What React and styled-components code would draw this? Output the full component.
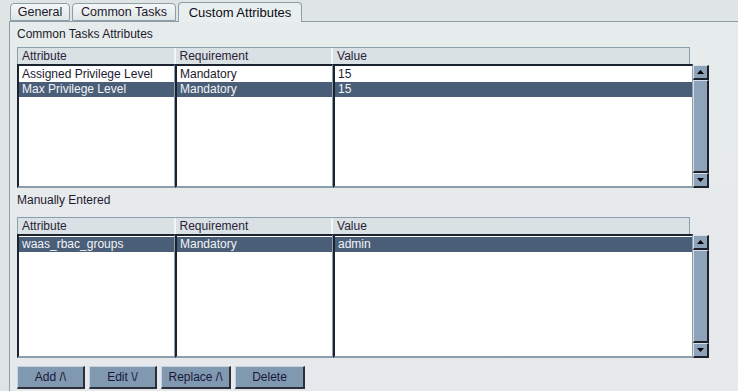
import React, {useState} from "react";
import styled, {createGlobalStyle} from "styled-components";

const GlobalStyle = createGlobalStyle`
  html, body {
    margin: 0;
    padding: 0;
    background: #dfe5e5;
    font-family: "Liberation Sans", Arial, sans-serif;
    font-size: 12px;
    color: #1c1a2e;
  }
`

const Page = styled.div`
  width: 738px;
  height: 391px;
  overflow: hidden;
  display: flex;
  flex-direction: column;
`

const TabRow = styled.div`
  display: flex;
  align-items: flex-end;
  height: 21px;
  padding-left: 10px;
  gap: 2px;
`

const Tab = styled.div`
  position: relative;
  z-index: ${p => p.$active ? 2 : 0};
  height: ${p => p.$active ? "20px" : "18px"};
  margin-bottom: ${p => p.$active ? "-1px" : "0"};
  width: ${p => p.$width}px;
  box-sizing: border-box;
  border: 1px solid #8e9ea6;
  border-bottom: ${p => p.$active ? "none" : "1px solid #8e9ea6"};
  border-radius: 4px 4px 0 0;
  background: ${p => p.$active ? "#e9eeee" : "linear-gradient(#f4f7f7, #dfe6e6)"};
  display: flex;
  align-items: center;
  justify-content: center;
  font-size: ${p => p.$active ? "13px" : "12.5px"};
  color: ${p => p.$active ? "#0c0c14" : "#1c1a2e"};
  padding-bottom: ${p => p.$active ? "1px" : "0"};
`

const Panel = styled.div`
  flex: 1;
  margin-left: 9px;
  border-left: 1px solid #8e9ea6;
  border-top: 1px solid #8e9ea6;
  background: linear-gradient(#e6eceb, #e7e8ec);
  padding: 5px 0 0 7px;
  display: flex;
  flex-direction: column;
`

const Label = styled.div`
  height: 14px;
  line-height: 14px;
  margin-top: ${p => p.$top}px;
  margin-bottom: ${p => p.$bottom}px;
  color: #1c1a2e;
`

const Header = styled.div`
  display: flex;
  width: 673px;
  height: 17px;
  box-sizing: border-box;
  border: 1px solid #8a9eac;
  border-bottom: none;
  background: #d9e1e5;
`

const HeaderCell = styled.div`
  width: ${p => p.$width}px;
  box-sizing: border-box;
  padding-left: 4px;
  line-height: 16px;
  border-right: ${p => p.$last ? "none" : "2px solid #f2f5f6"};
  color: #2a2236;
`

const ListArea = styled.div`
  display: flex;
  width: 692px;
  height: 124px;
`

const Column = styled.div`
  width: ${p => p.$width}px;
  box-sizing: border-box;
  background: #ffffff;
  border-top: 2px solid #1b2230;
  border-left: 2px solid #1b2230;
  border-right: 1px solid #8c9eac;
  border-bottom: 2px solid #8c9eac;
  padding-top: 1px;
  overflow: hidden;
`

const Cell = styled.div`
  height: 15px;
  line-height: 15px;
  padding-left: 3px;
  white-space: nowrap;
  background: ${p => p.$selected ? "#4a5e77" : "transparent"};
  color: ${p => p.$selected ? "#f2f4f8" : "#1c1a2e"};
`

const ScrollBar = styled.div`
  width: 16px;
  margin-top: 1px;
  display: flex;
  flex-direction: column;
  background: #8ea2b8;
`

const ArrowButton = styled.div`
  height: 15px;
  box-sizing: border-box;
  background: #8ea3ba;
  border-top: 1px solid #d7e0ea;
  border-left: 1px solid #d7e0ea;
  border-right: 2px solid #1c2028;
  border-bottom: 2px solid #1c2028;
  display: flex;
  align-items: center;
  justify-content: center;
`

const Thumb = styled.div`
  flex: 1;
  box-sizing: border-box;
  background: #8ea3ba;
  border-top: 1px solid #d7e0ea;
  border-left: 1px solid #d7e0ea;
  border-right: 2px solid #1c2028;
  border-bottom: 2px solid #1c2028;
`

const ButtonRow = styled.div`
  display: flex;
  gap: 4px;
  margin-top: 8px;
`

const ButtonElement = ({className, children, onClick}) => {
  return <button className={className} onClick={onClick}>{children}</button>
}

const Button = styled(ButtonElement)`
  width: ${p => p.width}px;
  height: 23px;
  box-sizing: border-box;
  padding: 0;
  background: #8099b1;
  border-top: 1px solid #c6d2de;
  border-left: 1px solid #c6d2de;
  border-right: 2px solid #2a2e38;
  border-bottom: 2px solid #2a2e38;
  font-family: "Liberation Sans", Arial, sans-serif;
  font-size: 12px;
  color: #1a1838;
`

const Arrow = ({up}) => (
  <svg width="7" height="4" viewBox="0 0 7 4">
    <polygon points={up ? "3.5,0 7,4 0,4" : "0,0 7,0 3.5,4"} fill="#000" />
  </svg>
)

const widths = [158, 158, 360]
const headerWidths = [158, 158, 357]
const headers = ["Attribute", "Requirement", "Value"]

function Table({rows, selected, onSelect}) {
  return (
    <>
      <Header>
        {headers.map((h, i) => (
          <HeaderCell key={h} $width={headerWidths[i]} $last={i === 2}>{h}</HeaderCell>
        ))}
      </Header>
      <ListArea>
        {widths.map((w, i) => (
          <Column key={i} $width={w}>
            {rows.map((r, j) => (
              <Cell key={j} $selected={selected === j} onClick={() => onSelect(j)}>{r[i]}</Cell>
            ))}
          </Column>
        ))}
        <ScrollBar>
          <ArrowButton><Arrow up /></ArrowButton>
          <Thumb />
          <ArrowButton><Arrow /></ArrowButton>
        </ScrollBar>
      </ListArea>
    </>
  )
}

const tabs = [
  {name: "General", width: 60},
  {name: "Common Tasks", width: 104},
  {name: "Custom Attributes", width: 124},
]

export default function App() {
  const [tab, setTab] = useState("Custom Attributes")
  const [sel1, setSel1] = useState(1)
  const [sel2, setSel2] = useState(0)

  return (
    <Page>
      <GlobalStyle />
      <TabRow>
        {tabs.map(t => (
          <Tab key={t.name} $width={t.width} $active={tab === t.name} onClick={() => setTab(t.name)}>
            {t.name}
          </Tab>
        ))}
      </TabRow>
      <Panel>
        <Label $top={0} $bottom={6}>Common Tasks Attributes</Label>
        <Table
          rows={[
            ["Assigned Privilege Level", "Mandatory", "15"],
            ["Max Privilege Level", "Mandatory", "15"],
          ]}
          selected={sel1}
          onSelect={setSel1}
        />
        <Label $top={5} $bottom={10}>Manually Entered</Label>
        <Table
          rows={[["waas_rbac_groups", "Mandatory", "admin"]]}
          selected={sel2}
          onSelect={setSel2}
        />
        <ButtonRow>
          <Button width={68}>Add /\</Button>
          <Button width={68}>Edit \/</Button>
          <Button width={70}>Replace /\</Button>
          <Button width={70}>Delete</Button>
        </ButtonRow>
      </Panel>
    </Page>
  )
}
